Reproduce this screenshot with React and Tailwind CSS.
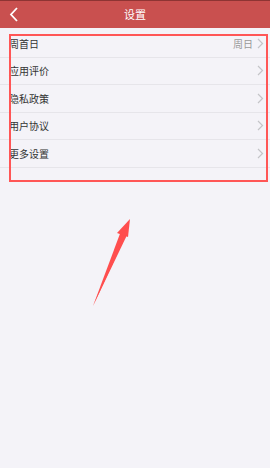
import React from "react";

const rows = [
  { label: "周首日", value: "周日" },
  { label: "应用评价" },
  { label: "隐私政策" },
  { label: "用户协议" },
  { label: "更多设置" },
];

function Chevron() {
  return (
    <svg width="7" height="11" viewBox="0 0 7 11" fill="none">
      <path d="M1 1l4.5 4.5L1 10" stroke="#c4c4c8" strokeWidth="1.2" />
    </svg>
  );
}

export default function App() {
  return (
    <div
      className="relative w-[270px] h-[468px] bg-[#f4f3f8] overflow-hidden"
      style={{ fontFamily: '"Noto Sans CJK SC", "Noto Sans", sans-serif' }}
    >
      <div className="h-[28px] bg-[#c9504f] border-t border-[#8e3433] flex items-center relative">
        <svg className="absolute left-[9px] top-[6px]" width="10" height="15" viewBox="0 0 10 15" fill="none">
          <path d="M8 1L2 7.5 8 14" stroke="#fff" strokeWidth="1.8" />
        </svg>
        <div className="flex-1 text-center text-white text-[11px]">设置</div>
      </div>

      <div className="mt-[2px]">
        {rows.map((r) => (
          <div
            key={r.label}
            className="h-[27.5px] flex items-center justify-between pl-[9px] pr-[6px] border-b border-[#e6e5ea]"
          >
            <span className="text-[10px] text-[#333]">{r.label}</span>
            <span className="flex items-center gap-[4px]">
              {r.value && <span className="text-[10px] text-[#999]">{r.value}</span>}
              <Chevron />
            </span>
          </div>
        ))}
      </div>

      <div className="absolute left-[9px] top-[34px] w-[259px] h-[148px] border-2 border-[#ff5656]" />

      <svg className="absolute left-0 top-0" width="270" height="468" viewBox="0 0 270 468">
        <path d="M93 306 L124 232 L127 233 Z" fill="#ff4e4e" />
        <path d="M93 306 L121 231 L128 233 Z" fill="#ff4e4e" />
        <path d="M130 219 L117 233 L128 237 Z" fill="#ff4e4e" />
      </svg>
    </div>
  );
}
